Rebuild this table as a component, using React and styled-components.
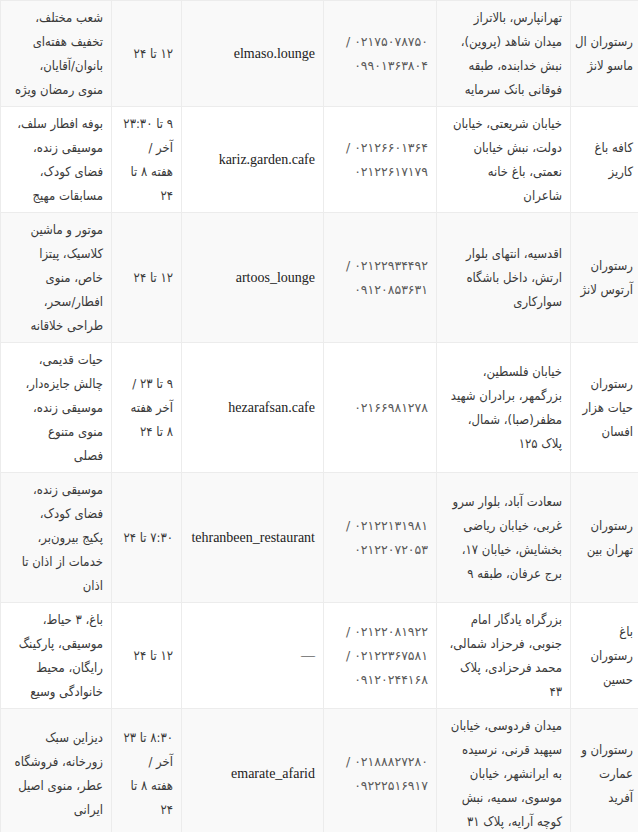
import React from "react"
import styled, { createGlobalStyle } from "styled-components"

// Cafe / restaurant list, drawn as an RTL table with zebra rows

const GlobalStyle = createGlobalStyle`
  body {
    margin: 0;
    background: #ffffff;
    font-family: "DejaVu Sans Condensed", "DejaVu Sans", sans-serif;
  }
`

const Table = styled.table`
  direction: rtl;
  width: 638px;
  table-layout: fixed;
  border-collapse: collapse;
  font-size: 13px;
  line-height: 24px;
  color: #3a3a3a;
`

const Col = styled.col`
  width: ${({ $w }) => $w}px;
`

const Row = styled.tr`
  background: ${({ $striped }) => ($striped ? "#f9f9f9" : "#ffffff")};
`

const Cell = styled.td`
  border: 1px solid #ececec;
  padding: 4.5px 8px;
  padding-right: ${({ $edge }) => ($edge ? "5px" : "8px")};
  text-align: right;
  vertical-align: middle;
  white-space: nowrap;
  overflow: hidden;
`

const PhoneCell = styled(Cell)`
  font-family: "DejaVu Sans", sans-serif;
  font-size: 12.5px;
  color: #5a5a5a;
`

const HandleCell = styled(Cell)`
  font-family: "Liberation Serif", "Times New Roman", serif;
  font-size: 14px;
  color: #222222;
`

const Lines = ({ items }) =>
  items.map((line, i) => (
    <React.Fragment key={i}>
      {i > 0 && <br />}
      {line}
    </React.Fragment>
  ))

const columns = [68, 134, 113, 142, 70, 111]

const places = [
  {
    name: ["رستوران ال", "ماسو لانژ"],
    address: ["تهرانپارس، بالاتراز", "میدان شاهد (پروین)،", "نبش خدابنده، طبقه", "فوقانی بانک سرمایه"],
    phone: ["۰۲۱۷۵۰۷۸۷۵۰ /", "۰۹۹۰۱۳۶۳۸۰۴"],
    insta: "elmaso.lounge",
    hours: ["۱۲ تا ۲۴"],
    features: ["شعب مختلف،", "تخفیف هفته‌ای", "بانوان/آقایان،", "منوی رمضان ویژه"],
  },
  {
    name: ["کافه باغ", "کاریز"],
    address: ["خیابان شریعتی، خیابان", "دولت، نبش خیابان", "نعمتی، باغ خانه", "شاعران"],
    phone: ["۰۲۱۲۶۶۰۱۳۶۴ /", "۰۲۱۲۲۶۱۷۱۷۹"],
    insta: "kariz.garden.cafe",
    hours: ["۹ تا ۲۳:۳۰", "آخر /", "هفته ۸ تا", "۲۴"],
    features: ["بوفه افطار سلف،", "موسیقی زنده،", "فضای کودک،", "مسابقات مهیج"],
  },
  {
    name: ["رستوران", "آرتوس لانژ"],
    address: ["اقدسیه، انتهای بلوار", "ارتش، داخل باشگاه", "سوارکاری"],
    phone: ["۰۲۱۲۲۹۳۴۴۹۲ /", "۰۹۱۲۰۸۵۳۶۳۱"],
    insta: "artoos_lounge",
    hours: ["۱۲ تا ۲۴"],
    features: ["موتور و ماشین", "کلاسیک، پیتزا", "خاص، منوی", "افطار/سحر،", "طراحی خلاقانه"],
  },
  {
    name: ["رستوران", "حیات هزار", "افسان"],
    address: ["خیابان فلسطین،", "بزرگمهر، برادران شهید", "مظفر(صبا)، شمال،", "پلاک ۱۲۵"],
    phone: ["۰۲۱۶۶۹۸۱۲۷۸"],
    insta: "hezarafsan.cafe",
    hours: ["۹ تا ۲۳ /", "آخر هفته", "۸ تا ۲۴"],
    features: ["حیات قدیمی،", "چالش جایزه‌دار،", "موسیقی زنده،", "منوی متنوع", "فصلی"],
  },
  {
    name: ["رستوران", "تهران بین"],
    address: ["سعادت آباد، بلوار سرو", "غربی، خیابان ریاضی", "بخشایش، خیابان ۱۷،", "برج عرفان، طبقه ۹"],
    phone: ["۰۲۱۲۲۱۳۱۹۸۱ /", "۰۲۱۲۲۰۷۲۰۵۳"],
    insta: "tehranbeen_restaurant",
    hours: ["۷:۳۰ تا ۲۴"],
    features: ["موسیقی زنده،", "فضای کودک،", "پکیج بیرون‌بر،", "خدمات از اذان تا", "اذان"],
  },
  {
    name: ["باغ", "رستوران", "حسین"],
    address: ["بزرگراه یادگار امام", "جنوبی، فرحزاد شمالی،", "محمد فرحزادی، پلاک", "۴۳"],
    phone: ["۰۲۱۲۲۰۸۱۹۲۲ /", "۰۲۱۲۲۳۶۷۵۸۱ /", "۰۹۱۲۰۲۴۴۱۶۸"],
    insta: "—",
    hours: ["۱۲ تا ۲۴"],
    features: ["باغ، ۳ حیاط،", "موسیقی، پارکینگ", "رایگان، محیط", "خانوادگی وسیع"],
  },
  {
    name: ["رستوران و", "عمارت", "آفرید"],
    address: ["میدان فردوسی، خیابان", "سپهبد قرنی، نرسیده", "به ایرانشهر، خیابان", "موسوی، سمیه، نبش", "کوچه آرایه، پلاک ۳۱"],
    phone: ["۰۲۱۸۸۸۲۷۲۸۰ /", "۰۹۲۲۲۵۱۶۹۱۷"],
    insta: "emarate_afarid",
    hours: ["۸:۳۰ تا ۲۳", "آخر /", "هفته ۸ تا", "۲۴"],
    features: ["دیزاین سبک", "زورخانه، فروشگاه", "عطر، منوی اصیل", "ایرانی"],
  },
]

const App = () => {
  return (
    <>
      <GlobalStyle />
      <Table>
        <colgroup>
          {columns.map((w, i) => (
            <Col key={i} $w={w} />
          ))}
        </colgroup>
        <tbody>
          {places.map((p, i) => (
            <Row key={p.insta + i} $striped={i % 2 === 0}>
              <Cell $edge>
                <Lines items={p.name} />
              </Cell>
              <Cell>
                <Lines items={p.address} />
              </Cell>
              <PhoneCell>
                <Lines items={p.phone} />
              </PhoneCell>
              <HandleCell>{p.insta}</HandleCell>
              <Cell>
                <Lines items={p.hours} />
              </Cell>
              <Cell>
                <Lines items={p.features} />
              </Cell>
            </Row>
          ))}
        </tbody>
      </Table>
    </>
  )
}

export default App
